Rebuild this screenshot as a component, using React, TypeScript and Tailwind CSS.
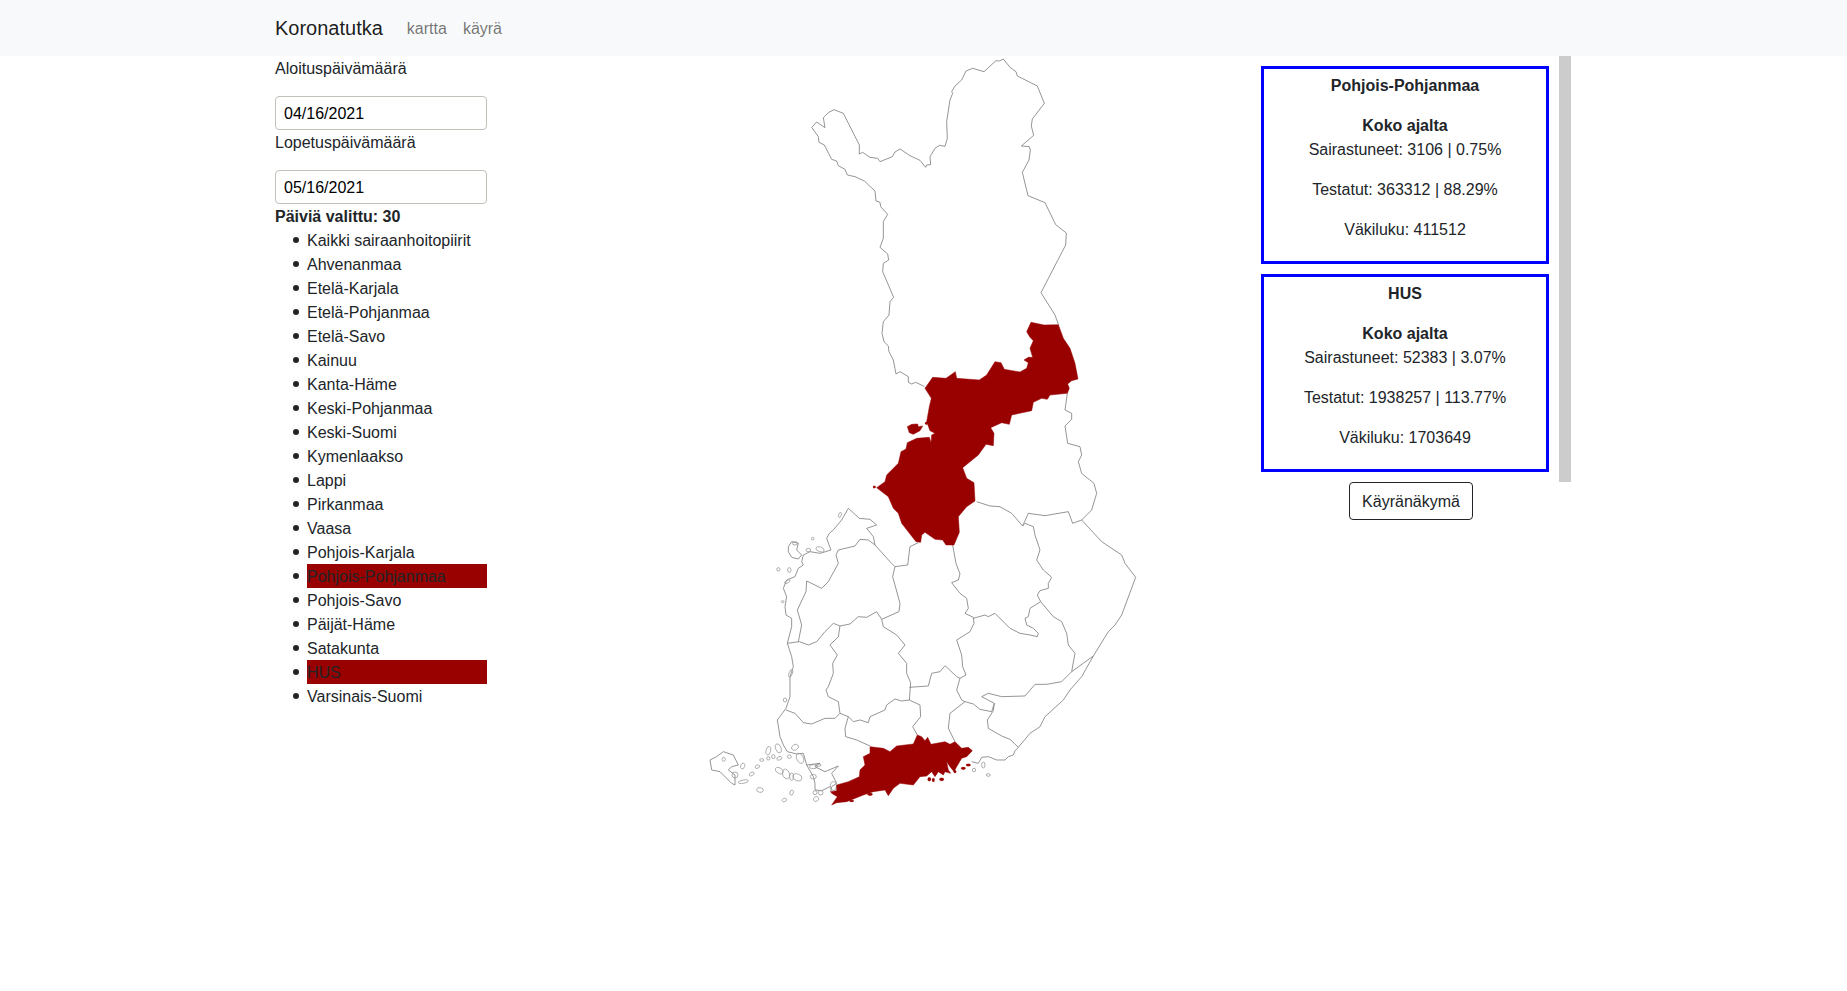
const districts = [
  "Kaikki sairaanhoitopiirit", "Ahvenanmaa", "Etelä-Karjala", "Etelä-Pohjanmaa", "Etelä-Savo", "Kainuu", "Kanta-Häme",
  "Keski-Pohjanmaa", "Keski-Suomi", "Kymenlaakso", "Lappi", "Pirkanmaa", "Vaasa", "Pohjois-Karjala", "Pohjois-Pohjanmaa",
  "Pohjois-Savo", "Päijät-Häme", "Satakunta", "HUS", "Varsinais-Suomi",
]
const selected = ["Pohjois-Pohjanmaa", "HUS"]

const stats = [
  { name: "Pohjois-Pohjanmaa", sick: "3106 | 0.75%", tested: "363312 | 88.29%", population: "411512" },
  { name: "HUS", sick: "52383 | 3.07%", tested: "1938257 | 113.77%", population: "1703649" },
]

// north part, traced at 3x from (690,50)
const lappi =
  "365,232 380,216 405,233 400,203 415,188 432,179 460,190 508,285 508,312 518,307 540,322 563,325 570,335 607,320 615,306 630,297 660,317 690,331 707,352 710,345 722,344 720,320 735,295 748,286 765,289 772,265 770,215 780,150 788,130 785,125 795,108 815,90 828,63 848,55 882,65 918,32 928,33 940,27 960,52 978,65 982,78 1042,108 1063,160 1027,207 1024,228 1031,256 994,288 1018,290 1021,300 1017,330 997,367 1014,437 1065,458 1097,524 1129,549 1127,585 1053,728 1095,795 1106,825 M703,1010 690,1003 677,997 665,1002 655,997 655,980 630,965 618,972 610,930 597,905 595,888 582,875 576,850 580,815 597,795 600,755 611,742 578,665 580,640 596,630 593,612 570,592 580,565 580,515 593,493 572,470 570,457 558,453 555,423 523,393 495,380 472,375 465,358 445,347 440,333 425,328 403,285 387,277 385,260 365,232"

// middle part, traced at 3x from (770,300)
const pohjois =
  "783,67 822,75 865,74 880,115 900,145 915,190 924,237 905,242 893,252 898,265 892,280 840,285 832,298 815,295 790,307 785,332 725,345 718,373 695,368 662,383 672,400 670,437 648,433 625,465 578,503 590,535 612,548 615,603 590,620 565,650 568,697 552,735 528,735 518,720 495,718 465,697 455,705 452,727 438,725 395,670 385,640 370,625 355,590 320,563 345,545 350,525 385,490 393,455 408,447 412,428 440,415 478,412 483,428 485,405 495,400 480,392 470,365 478,320 484,295 465,265 488,232 528,235 556,215 560,235 628,240 650,225 675,185 693,188 703,208 750,216 770,205 775,188 762,180 775,172 788,172 780,145 790,122 780,112 770,95"
const pohjoisIsland = "412,380 425,373 443,372 445,380 458,378 450,392 430,403 418,398"
const kainuu =
  "892,280 885,330 905,340 905,358 885,378 893,430 930,440 935,465 925,485 935,520 972,550 980,580 965,630 935,660"

// south part, traced at 3x from (700,500)
const southLines = [
  "1145,60 1205,125 1265,165 1275,190 1307,232 1265,345 1245,375 1225,395 1180,468 1145,530 1110,570 1090,600 1035,650 1020,680 990,700 955,742 945,752 940,765 925,770 915,780 890,780 865,770 845,772 835,790 815,785",
  "830,5 870,18 900,20 935,40 968,78 985,40 1035,47 1105,35 1118,70 1145,60",
  "968,78 975,70 1000,80 1005,105 1020,150 1010,180 1030,210 1055,232 1045,250 1045,265 1020,272 1012,285 1022,305 1060,350 1085,365 1100,400 1105,435 1125,460 1115,515",
  "1022,305 990,325 985,350 975,355 980,375 1000,385 1015,400 1012,410 990,405 960,400 930,385 885,340 865,350 855,345 820,355",
  "758,135 768,190 780,222 775,240 755,248 780,280 800,295 805,325 795,340 820,352 822,370 810,395 770,420 785,465 788,500 798,525 780,535",
  "655,128 630,140 623,195 585,200 578,230 600,310 597,335 545,358 530,335 500,352 475,350 450,372 420,378 400,370 375,395 350,425 325,435 298,425 262,430",
  "445,25 478,55 510,58 530,75 500,85 520,110 525,135 570,185 585,200",
  "525,135 505,120 480,118 465,138 415,150 408,165 415,190 385,245 365,265 320,243 318,275 292,330 305,375 295,425",
  "445,25 425,60 400,90 388,100 380,115 393,150 360,160 330,155 310,165 305,185 310,195 295,205 285,230 260,240 250,265 260,290 255,320 258,345 275,355 275,380 262,430 275,470 280,500 270,530 270,590 258,625",
  "420,378 415,410 390,435 412,465 398,490 400,520 385,560 378,570 385,590 415,605 420,640",
  "545,358 550,380 590,405 615,435 595,460 620,490 620,520 632,548 628,600",
  "628,600 605,603 585,597 560,615 555,630 510,650 505,668 480,660 460,665 445,650 420,640 405,655 375,655 335,672 310,668 285,640 258,630",
  "628,562 685,558 695,520 720,515 735,497 770,530 780,535 770,570 785,600 795,605 750,640 745,685 765,725",
  "628,600 660,615 662,650 638,680 652,705",
  "445,650 435,685 437,710 470,720 510,738",
  "795,605 820,612 840,628 875,635 883,610 845,590 865,580 905,590 975,588 1005,553 1040,553 1085,545 1115,515 1180,468",
  "883,610 880,632 862,660 865,685 905,708 930,718 955,742",
  "258,625 232,660 240,710 250,735 262,755 290,762 310,760 320,795 360,790 345,800 375,815 415,798 395,820 410,850 395,860 392,875",
  // saaristo
  "30,780 50,770 70,755 100,765 115,795 95,800 85,810 105,825 105,855 95,850 60,815 35,810 30,780",
  "265,140 275,125 295,130 290,150 305,165 295,177 275,172 265,155 265,140",
  "320,795 340,830 345,850 345,870 365,872 390,860",
]

const uusimaa =
  "510,740 550,745 570,755 590,738 640,732 652,705 665,710 675,722 683,712 693,733 735,725 750,733 765,725 785,745 805,742 817,752 800,770 785,775 770,800 762,815 750,800 740,785 745,810 752,820 735,815 730,825 715,815 705,830 695,815 680,828 660,830 640,855 600,850 580,865 565,887 555,870 520,875 490,885 440,905 410,908 395,915 412,890 395,880 392,875 410,872 410,855 445,845 478,830 480,810 495,795 490,770 510,760"

const redIslands = [
  [688, 838, 5, 6], [700, 840, 4, 6], [725, 838, 7, 5], [765, 815, 4, 4], [790, 805, 7, 4], [805, 795, 7, 4], [455, 903, 7, 3], [510, 883, 8, 4],
]

const islands = [
  [235, 208, 5, 5, 0], [268, 210, 5, 7, 0], [338, 116, 4, 4, 0], [325, 150, 7, 5, 0], [360, 148, 13, 7, 20], [285, 130, 8, 5, 0], [420, 45, 4, 8, 20],
  [262, 245, 9, 4, -30], [248, 305, 4, 3, 0], [255, 600, 5, 6, 0], [272, 520, 5, 12, 20],
  [130, 845, 15, 5, -10], [155, 822, 8, 5, -30], [172, 800, 7, 5, -20], [185, 780, 6, 4, 0], [205, 752, 7, 13, 15], [235, 745, 8, 14, -20],
  [285, 742, 11, 8, -30], [300, 775, 10, 16, -25], [268, 770, 6, 5, 0], [238, 775, 8, 5, -20], [220, 770, 5, 6, 0], [205, 775, 5, 5, 0],
  [238, 812, 13, 8, 30], [258, 822, 10, 15, -20], [292, 832, 14, 10, 20], [275, 830, 6, 11, 0], [340, 830, 9, 7, 0], [340, 800, 12, 6, 0], [355, 795, 8, 4, 0],
  [400, 858, 9, 13, 0], [345, 878, 6, 6, 0], [362, 878, 7, 7, 0], [348, 897, 8, 7, -30], [275, 878, 5, 8, 20], [253, 900, 7, 5, -20], [180, 870, 10, 7, 10],
  [71, 778, 5, 6, 0], [128, 798, 6, 9, 20], [105, 825, 9, 9, 0], [850, 795, 5, 9, 0], [865, 825, 6, 4, 0], [822, 810, 5, 5, 0],
]

function toPath(points: string) {
  return "M" + points
}

function FinlandMap() {
  return (
    <svg viewBox="0 0 450 764" className="w-[450px] h-[764px] shrink-0 ml-[213px]">
      <g fill="none" stroke="#7a7a7a" strokeWidth={0.8}>
        <g transform="translate(-10 -6) scale(0.33333)">
          <path d={toPath(lappi)} vectorEffect="non-scaling-stroke" />
        </g>
        <g transform="translate(70 244) scale(0.33333)">
          <path d={toPath(kainuu)} vectorEffect="non-scaling-stroke" />
        </g>
        <g transform="translate(0 444) scale(0.33333)">
          {southLines.map((line, i) => (
            <path key={i} d={toPath(line)} vectorEffect="non-scaling-stroke" />
          ))}
          {islands.map(([cx, cy, rx, ry, rot], i) => (
            <ellipse
              key={i}
              cx={cx}
              cy={cy}
              rx={rx}
              ry={ry}
              stroke="#999999"
              transform={`rotate(${rot} ${cx} ${cy})`}
              vectorEffect="non-scaling-stroke"
            />
          ))}
        </g>
      </g>
      <g fill="#990000" stroke="#990000" strokeWidth={0.5}>
        <g transform="translate(70 244) scale(0.33333)">
          <path d={toPath(pohjois) + "Z"} vectorEffect="non-scaling-stroke" />
          <path d={toPath(pohjoisIsland) + "Z"} vectorEffect="non-scaling-stroke" />
          <circle cx={469} cy={370} r={4} />
          <circle cx={313} cy={561} r={4} />
        </g>
        <g transform="translate(0 444) scale(0.33333)">
          <path d={toPath(uusimaa) + "Z"} vectorEffect="non-scaling-stroke" />
          {redIslands.map(([cx, cy, rx, ry], i) => (
            <ellipse key={i} cx={cx} cy={cy} rx={rx} ry={ry} />
          ))}
        </g>
      </g>
    </svg>
  )
}

export default function App() {
  return (
    <div className="font-['Liberation_Sans',Arial,sans-serif] text-base leading-[26px] text-[#212529] bg-white min-h-[991px]">
      <nav className="h-14 bg-[#f8f9fa]">
        <div className="w-[1320px] ml-[263px] px-3 h-full flex items-center">
          <a className="text-xl leading-[30px] text-black/90 mr-4">Koronatutka</a>
          <a className="h-6 px-2 text-black/55">kartta</a>
          <a className="h-6 px-2 text-black/55">käyrä</a>
        </div>
      </nav>

      <div className="w-[1320px] ml-[263px] px-3 flex items-start">
        <div className="w-[212px] shrink-0">
          <p className="h-6 mb-4">Aloituspäivämäärä</p>
          <input
            readOnly
            value="04/16/2021"
            className="block w-full h-[34px] px-2 pt-[2px] border border-[#c4c0ba] rounded text-black outline-none"
          />
          <p className="h-6 mb-4">Lopetuspäivämäärä</p>
          <input
            readOnly
            value="05/16/2021"
            className="block w-full h-[34px] px-2 pt-[2px] border border-[#c4c0ba] rounded text-black outline-none"
          />
          <div className="h-6 font-bold">Päiviä valittu: 30</div>
          <ul className="pl-[18px]">
            {districts.map((d) => (
              <li key={d} className="flex items-center gap-2 h-6">
                <span className="w-[6px] h-[6px] rounded-full bg-[#212529] shrink-0" />
                <span className={selected.includes(d) ? "flex-1 h-6 bg-[#990000]" : "flex-1 h-6"}>{d}</span>
              </li>
            ))}
          </ul>
        </div>

        <FinlandMap />

        <div className="w-[310px] shrink-0 ml-[111px]">
          <div className="h-[426px] flex items-start justify-between">
            <div className="w-[288px] pt-2.5 flex flex-col gap-2.5">
              {stats.map((s) => (
                <div key={s.name} className="h-[198px] border-[3px] border-[#0000ff] pt-1 text-center">
                  <p className="h-6 font-bold mb-4">{s.name}</p>
                  <p className="h-6 font-bold">Koko ajalta</p>
                  <p className="h-6 mb-4">Sairastuneet: {s.sick}</p>
                  <p className="h-6 mb-4">Testatut: {s.tested}</p>
                  <p className="h-6">Väkiluku: {s.population}</p>
                </div>
              ))}
            </div>
            <div className="w-3 h-full bg-[#cccccc]" />
          </div>
          <button className="ml-[88px] w-[124px] h-[38px] pt-[2px] border border-[#212529] rounded bg-white text-[#212529]">
            Käyränäkymä
          </button>
        </div>
      </div>
    </div>
  )
}
